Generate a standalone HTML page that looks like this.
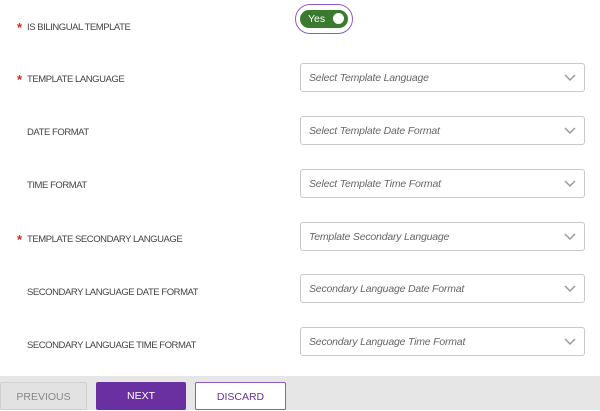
<!DOCTYPE html>
<html><head><style>
body{margin:0;width:600px;height:410px;background:#fff;font-family:"Liberation Sans",sans-serif;position:relative;overflow:hidden}
.lbl{position:absolute;left:27px;font-size:9.5px;color:#444;letter-spacing:-0.45px}
.star{position:absolute;left:17px;color:#d9261c;font-size:13px;font-weight:bold}
.sel{position:absolute;left:300px;width:285px;height:29px;border:1px solid #c9c9c9;border-radius:3px;box-sizing:border-box}
.sel span{position:absolute;left:8px;top:8px;font-size:10.5px;font-style:italic;color:#666;letter-spacing:-0.2px}
.sel svg{position:absolute;right:8px;top:10px}
.foot{position:absolute;left:0;top:376px;width:600px;height:34px;background:#e6e6e6}
.btn{position:absolute;top:382px;height:28px;box-sizing:border-box;font-size:10.5px;text-align:center;line-height:28px;border-radius:2px}
</style></head><body>
<span class="star" style="top:20px">*</span><div class="lbl" style="top:22px">IS BILINGUAL TEMPLATE</div>
<div style="position:absolute;left:295px;top:4px;width:58px;height:30px;border:1.5px solid #8a5cc8;border-radius:16px;box-sizing:border-box"></div>
<div style="position:absolute;left:300px;top:10px;width:48px;height:18px;background:#3a7a2e;border-radius:9px"></div>
<div style="position:absolute;left:308px;top:13px;color:#fff;font-size:10.5px">Yes</div>
<div style="position:absolute;left:333px;top:13px;width:11px;height:11px;background:#fff;border-radius:50%"></div>

<span class="star" style="top:72px">*</span><div class="lbl" style="top:74px">TEMPLATE LANGUAGE</div>
<div class="sel" style="top:63px"><span>Select Template Language</span><svg width="12" height="8"><path d="M1 1l5 5 5-5" stroke="#999" stroke-width="1.5" fill="none"/></svg></div>
<div class="lbl" style="top:127px">DATE FORMAT</div>
<div class="sel" style="top:116px"><span>Select Template Date Format</span><svg width="12" height="8"><path d="M1 1l5 5 5-5" stroke="#999" stroke-width="1.5" fill="none"/></svg></div>
<div class="lbl" style="top:180px">TIME FORMAT</div>
<div class="sel" style="top:169px"><span>Select Template Time Format</span><svg width="12" height="8"><path d="M1 1l5 5 5-5" stroke="#999" stroke-width="1.5" fill="none"/></svg></div>
<span class="star" style="top:232px">*</span><div class="lbl" style="top:234px">TEMPLATE SECONDARY LANGUAGE</div>
<div class="sel" style="top:222px"><span>Template Secondary Language</span><svg width="12" height="8"><path d="M1 1l5 5 5-5" stroke="#999" stroke-width="1.5" fill="none"/></svg></div>
<div class="lbl" style="top:287px">SECONDARY LANGUAGE DATE FORMAT</div>
<div class="sel" style="top:274px"><span>Secondary Language Date Format</span><svg width="12" height="8"><path d="M1 1l5 5 5-5" stroke="#999" stroke-width="1.5" fill="none"/></svg></div>
<div class="lbl" style="top:340px">SECONDARY LANGUAGE TIME FORMAT</div>
<div class="sel" style="top:327px"><span>Secondary Language Time Format</span><svg width="12" height="8"><path d="M1 1l5 5 5-5" stroke="#999" stroke-width="1.5" fill="none"/></svg></div>

<div class="foot"></div>
<div class="btn" style="left:0;width:87px;background:#e2e2e2;border:1px solid #d0d0d0;color:#888">PREVIOUS</div>
<div class="btn" style="left:96px;width:90px;background:#6a2fa0;color:#fff">NEXT</div>
<div class="btn" style="left:195px;width:91px;background:#fff;border:1px solid #8a5cc8;color:#6a2fa0">DISCARD</div>
</body></html>
